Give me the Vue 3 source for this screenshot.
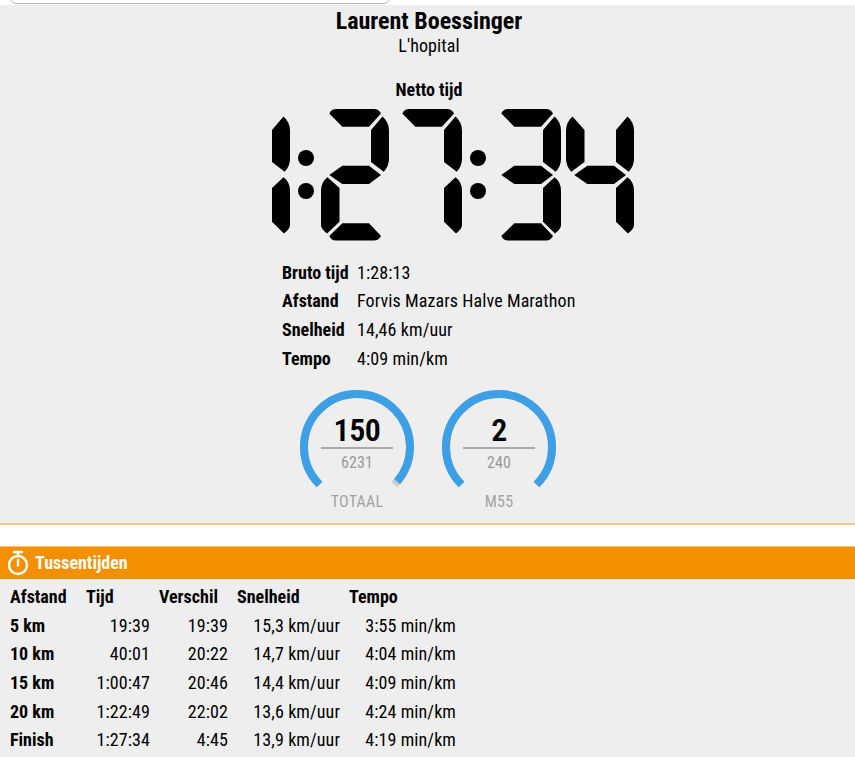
<template>
  <div class="page">
    <div class="top-strip"><div class="search-box"></div></div>

    <section class="result">
      <h1 class="name">{{ runner.name }}</h1>
      <div class="city">{{ runner.city }}</div>
      <div class="netto-label">Netto tijd</div>

      <!-- zeven-segment klok -->
      <div class="clock" role="img" :aria-label="runner.netto">
        <template v-for="(ch, i) in clockChars" :key="i">
          <div v-if="ch === ':'" class="colon"><span></span><span></span></div>
          <svg v-else class="digit" viewBox="0 0 68 132" width="68" height="132">
            <path v-for="s in segmentsFor(ch)" :key="s" :d="segments[s]" />
          </svg>
        </template>
      </div>

      <table class="info">
        <tbody>
          <tr v-for="row in info" :key="row.label">
            <th>{{ row.label }}</th>
            <td>{{ row.value }}</td>
          </tr>
        </tbody>
      </table>

      <div class="gauges">
        <div v-for="g in gauges" :key="g.label" class="gauge">
          <div class="dial">
            <svg class="ring" viewBox="0 0 114 114" width="114" height="114">
              <circle class="track" cx="57" cy="57" r="53" pathLength="360" stroke-dasharray="270 90" transform="rotate(135 57 57)" />
              <circle class="bar" cx="57" cy="57" r="53" pathLength="360" :stroke-dasharray="`${g.fill * 2.7} 360`" transform="rotate(135 57 57)" />
            </svg>
            <div class="place">{{ g.place }}</div>
            <div class="total">{{ g.total }}</div>
          </div>
          <div class="gauge-label">{{ g.label }}</div>
        </div>
      </div>
    </section>

    <div class="spacer"></div>

    <section class="splits">
      <header class="splits-head">
        <svg class="stopwatch" viewBox="0 0 22 26" width="22" height="26">
          <path d="M7 2h8M11 2v4" />
          <circle cx="11" cy="15" r="9" />
          <path d="M11 10v5.5" />
        </svg>
        <span>Tussentijden</span>
      </header>
      <table class="split-table">
        <thead>
          <tr>
            <th>Afstand</th>
            <th>Tijd</th>
            <th>Verschil</th>
            <th>Snelheid</th>
            <th>Tempo</th>
          </tr>
        </thead>
        <tbody>
          <tr v-for="s in splits" :key="s[0]">
            <th>{{ s[0] }}</th>
            <td>{{ s[1] }}</td>
            <td>{{ s[2] }}</td>
            <td>{{ s[3] }}</td>
            <td>{{ s[4] }}</td>
          </tr>
        </tbody>
      </table>
    </section>
  </div>
</template>

<script setup>
import { computed } from 'vue'

const runner = {
  name: 'Laurent Boessinger',
  city: "L'hopital",
  netto: '1:27:34'
}

const info = [
  { label: 'Bruto tijd', value: '1:28:13' },
  { label: 'Afstand', value: 'Forvis Mazars Halve Marathon' },
  { label: 'Snelheid', value: '14,46 km/uur' },
  { label: 'Tempo', value: '4:09 min/km' }
]

// fill: percentage van de boog van 270 graden
const gauges = [
  { place: 150, total: 6231, label: 'TOTAAL', fill: 98.4 },
  { place: 2, total: 240, label: 'M55', fill: 100 }
]

const splits = [
  ['5 km', '19:39', '19:39', '15,3 km/uur', '3:55 min/km'],
  ['10 km', '40:01', '20:22', '14,7 km/uur', '4:04 min/km'],
  ['15 km', '1:00:47', '20:46', '14,4 km/uur', '4:09 min/km'],
  ['20 km', '1:22:49', '22:02', '13,6 km/uur', '4:24 min/km'],
  ['Finish', '1:27:34', '4:45', '13,9 km/uur', '4:19 min/km']
]

const clockChars = computed(() => runner.netto.split(''))

// a=boven, b=rechtsboven, c=rechtsonder, d=onder, e=linksonder, f=linksboven, g=midden
const segments = {
  a: 'M8.3 4.4Q10.5 0 15 0H53Q57.5 0 60 4.4L48 17.7H21.3Z',
  b: 'M61.5 7.5Q68 13 68 22V50Q68 57 62.7 62.7L50 53V21Z',
  c: 'M61.5 68.3Q68 73 68 82V116Q68 120 62 124.5L50 112.7V79Z',
  d: 'M8.3 127L21.3 114.3H48L60 127Q57.5 131.5 53 131.5H15Q10.5 131.5 8.3 127Z',
  e: 'M6.5 68.3Q0 73 0 82V116Q0 120 6 124.5L18.5 112.7V79Z',
  f: 'M6.5 7.5Q0 13 0 22V50Q0 57 5.3 62.7L18.5 53V21Z',
  g: 'M8.3 66L21.3 56.7H48L60 66L48 75H21.3Z'
}

const digitMap = {
  0: 'abcdef',
  1: 'bc',
  2: 'abged',
  3: 'abgcd',
  4: 'fgbc',
  5: 'afgcd',
  6: 'afgcde',
  7: 'abc',
  8: 'abcdefg',
  9: 'abcdfg'
}

const segmentsFor = (ch) => digitMap[ch].split('')
</script>

<style>
html,
body {
  margin: 0;
  background: #fff;
}
</style>

<style scoped>
.page {
  width: 855px;
  height: 757px;
  overflow: hidden;
  font-family: "Roboto Condensed", "Liberation Sans Narrow", Roboto, sans-serif;
  font-stretch: 75%;
  color: #000;
}

.top-strip {
  height: 5px;
  padding: 0 10px;
  display: flex;
  align-items: flex-end;
  overflow: hidden;
}

.search-box {
  flex: 0 0 380px;
  height: 24px;
  box-sizing: border-box;
  margin-bottom: 1px;
  border: 1px solid #bbb;
  border-radius: 0 0 6px 6px;
}

.result {
  height: 520px;
  box-sizing: border-box;
  background: #eee;
  border-bottom: 2px solid #f6c68c;
  text-align: center;
}

.name {
  margin: 0;
  padding-left: 3px;
  font-size: 24px;
  line-height: 32px;
  font-weight: 700;
}

.city {
  padding-left: 3px;
  font-size: 18px;
  line-height: 18px;
  letter-spacing: 0.1px;
}

.netto-label {
  margin-top: 23px;
  padding-left: 3px;
  font-size: 18px;
  line-height: 24px;
  font-weight: 700;
}

.clock {
  display: flex;
  justify-content: center;
  margin-top: 7px;
}

.digit {
  display: block;
  fill: #000;
}

.digit + .digit {
  margin-left: 5px;
}

.colon {
  width: 31px;
  display: flex;
  flex-direction: column;
  align-items: center;
  gap: 17px;
  padding: 41px 0 0 2px;
  box-sizing: border-box;
}

.colon span {
  width: 16px;
  height: 16px;
  border-radius: 50%;
  background: #000;
}

.info {
  margin: 17px auto 0 282px;
  border-collapse: collapse;
  font-size: 18px;
  text-align: left;
}

.info th,
.info td {
  padding: 0;
  height: 28.6px;
  white-space: nowrap;
}

.info th {
  width: 75px;
  font-weight: 700;
}

.info td {
  letter-spacing: 0.1px;
}

.gauges {
  display: flex;
  justify-content: center;
  gap: 28px;
  margin: 18px 0 0 1px;
}

.gauge {
  width: 114px;
}

.dial {
  position: relative;
  height: 114px;
  box-sizing: border-box;
  padding-top: 23px;
}

.ring {
  position: absolute;
  left: 0;
  top: 0;
}

.ring circle {
  fill: none;
  stroke-width: 8;
}

.track {
  stroke: #ccc;
}

.bar {
  stroke: #3d9fe6;
}

.place {
  width: 72px;
  margin: 0 auto;
  border-bottom: 2px solid #aaa;
  font-size: 32px;
  line-height: 34px;
  font-weight: 600;
  letter-spacing: -0.5px;
}

.total {
  font-size: 16px;
  line-height: 28px;
  color: #999;
  letter-spacing: 0.1px;
}

.gauge-label {
  margin-top: -12px;
  font-size: 16px;
  line-height: 20px;
  color: #a3a3a3;
  letter-spacing: 0.2px;
}

.spacer {
  height: 21px;
}

.splits {
  height: 211px;
  background: #eee;
}

.splits-head {
  height: 33px;
  box-sizing: border-box;
  border-top: 1px solid #f8c274;
  background: #f49000;
  padding: 0 0 2px 7px;
  display: flex;
  align-items: center;
  gap: 6px;
  color: #fff;
  font-size: 18px;
  font-weight: 700;
}

.stopwatch {
  display: block;
  margin-top: 2px;
  fill: none;
  stroke: #fff;
  stroke-width: 2.4;
  stroke-linecap: round;
}

.split-table {
  border-collapse: collapse;
  table-layout: fixed;
  width: 446px;
  margin: 3.5px 0 0 10px;
  font-size: 18px;
  text-align: left;
}

.split-table th,
.split-table td {
  box-sizing: border-box;
  padding: 0;
  height: 28.6px;
  white-space: nowrap;
}

.split-table th {
  font-weight: 700;
}

.split-table td {
  text-align: right;
  letter-spacing: 0.1px;
}

.split-table tr > :nth-child(1) {
  width: 76px;
}

.split-table tr > :nth-child(2) {
  width: 64px;
}

.split-table tr > :nth-child(3) {
  width: 78px;
}

.split-table tr > :nth-child(4) {
  width: 112px;
}

.split-table tr > :nth-child(5) {
  width: 116px;
}

.split-table thead tr > :nth-child(n + 3) {
  padding-left: 9px;
}
</style>
